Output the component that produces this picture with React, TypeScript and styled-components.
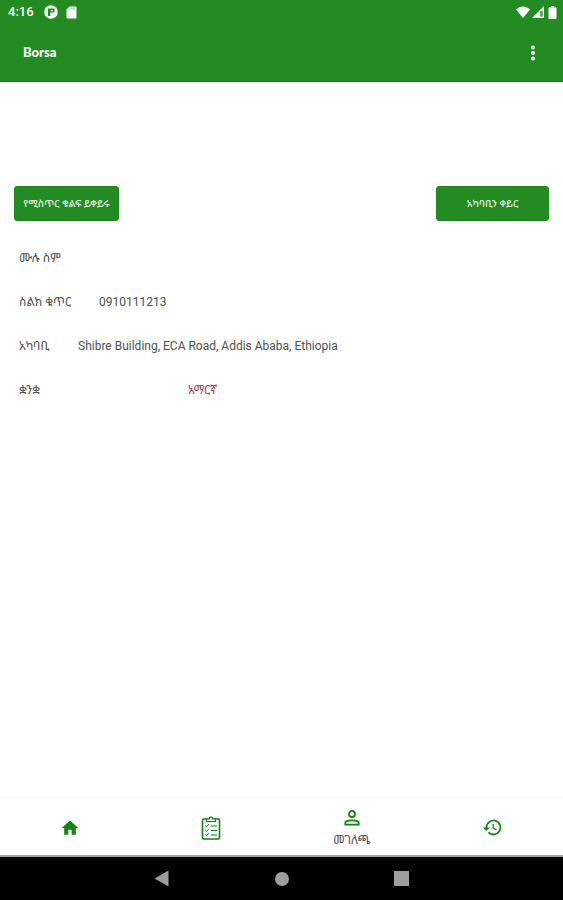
import React from "react";
import styled, { createGlobalStyle } from "styled-components";

const GREEN = "#228b22";
const ICON_GREEN = "#128412";

const GlobalStyle = createGlobalStyle`
  *, *::before, *::after { box-sizing: border-box; }
  body {
    margin: 0;
    background: #fff;
    color: #505050;
    font-family: Roboto, "Noto Sans Ethiopic", "Abyssinica SIL", "Noto Sans", sans-serif;
    font-size: 12px;
    line-height: 16px;
  }
  button { font-family: inherit; cursor: pointer; }
  svg { display: block; }
`;

const Screen = styled.div`
  display: flex;
  flex-direction: column;
  min-height: 100vh;
`;

const Header = styled.header`
  background: ${GREEN};
  color: #fff;
  border-bottom: 1px solid #1f821f;
`;

const StatusBar = styled.div`
  display: flex;
  align-items: center;
  justify-content: space-between;
  height: 24px;
  padding: 0 6px 0 8px;
`;

const StatusGroup = styled.div<{ $gap: number }>`
  display: flex;
  align-items: center;
  gap: ${({ $gap }) => $gap}px;
`;

const Clock = styled.time`
  font-size: 13px;
  font-weight: 500;
`;

const AppBar = styled.div`
  display: flex;
  align-items: center;
  justify-content: space-between;
  height: 57px;
  padding: 0 18px 0 23px;
`;

const Title = styled.h1`
  margin: 0;
  padding-bottom: 2px;
  font-family: Lato, sans-serif;
  font-size: 13px;
  font-weight: 900;
  line-height: 16px;
`;

const IconButton = styled.button`
  display: grid;
  place-items: center;
  width: 24px;
  height: 32px;
  padding: 0;
  border: 0;
  background: none;
  color: inherit;
`;

const Content = styled.main`
  flex: 1;
  padding: 104px 14px 0;
`;

const Actions = styled.div`
  display: flex;
  justify-content: space-between;
  margin-bottom: 21px;
`;

const ActionButton = styled.button<{ $width: number }>`
  width: ${({ $width }) => $width}px;
  height: 35px;
  padding: 0 0 2px;
  border: 1px solid #1f851f;
  border-radius: 3px;
  background: ${GREEN};
  color: #e8f4e8;
  font-size: 10px;
  font-weight: 500;
  white-space: nowrap;
`;

const Details = styled.dl`
  display: flex;
  flex-direction: column;
  gap: 12px;
  margin: 0;
  padding-left: 5px;
`;

const DetailRow = styled.div`
  display: flex;
  align-items: center;
  min-height: 32px;
`;

const Label = styled.dt<{ $width: number }>`
  flex: none;
  width: ${({ $width }) => $width}px;
  white-space: nowrap;
`;

const Value = styled.dd`
  margin: 0;
`;

const LanguageButton = styled.button`
  display: block;
  padding: 0;
  border: 0;
  background: none;
  color: #a8324c;
  font-size: 12px;
  line-height: 16px;
`;

const Tabs = styled.nav`
  display: grid;
  grid-template-columns: repeat(4, 1fr);
  height: 60px;
  border-top: 1px solid #f8f8f8;
  border-bottom: 2px solid #a4a4a4;
`;

const Tab = styled.a`
  display: flex;
  flex-direction: column;
  align-items: center;
  justify-content: center;
  gap: 8px;
  padding-top: 2px;
  color: ${ICON_GREEN};
  text-decoration: none;
`;

const TabLabel = styled.span`
  color: #505050;
  font-size: 12px;
  line-height: 12px;
`;

const SystemBar = styled.div`
  display: flex;
  align-items: center;
  justify-content: center;
  gap: 96px;
  height: 43px;
  background: #000;
  color: #9e9e9e;
`;

const AppIcon = () => (
  <svg width="14" height="14" viewBox="0 0 14 14" aria-hidden="true">
    <circle cx="7" cy="7" r="6.8" fill="#fff" />
    <path d="M4 3.5h6.500v4H6.300V11H4z" fill={GREEN} />
    <path d="M6.500 5.200H9v1H6.500z" fill="#fff" />
  </svg>
);

const CardIcon = () => (
  <svg width="11" height="13" viewBox="0 0 11 13" aria-hidden="true">
    <path d="M3.5.5h6a1 1 0 0 1 1 1v10a1 1 0 0 1-1 1h-8a1 1 0 0 1-1-1v-8z" fill="#fff" />
    <path d="M4 2v1.500M6 2v1.500M8 2v1.500" stroke={GREEN} strokeWidth=".6" />
  </svg>
);

const WifiIcon = () => (
  <svg width="14" height="12" viewBox="0 0 14 12" aria-hidden="true">
    <path d="M0 3.4C4-.6 10-.6 14 3.4L7 12z" fill="#fff" />
  </svg>
);

const SignalIcon = () => (
  <svg width="12" height="12" viewBox="0 0 12 12" aria-hidden="true">
    <path d="M0 12 12 0v12z" fill="#fff" />
    <path d="M8.300 5h2.500v5.500H8.300z" fill={GREEN} />
    <path d="M9.300 5h1.200v5H9.300z" fill="#fff" opacity=".35" />
  </svg>
);

const BatteryIcon = () => (
  <svg width="9" height="13" viewBox="0 0 9 13" aria-hidden="true">
    <path d="M3 0h3v1.200h1.500q1 0 1 1V12q0 1-1 1h-6q-1 0-1-1V2.200q0-1 1-1H3z" fill="#fff" />
  </svg>
);

const MoreIcon = () => (
  <svg width="6" height="18" viewBox="0 0 6 18" fill="currentColor" aria-hidden="true">
    <circle cx="3" cy="3.400" r="2" />
    <circle cx="3" cy="9" r="2" />
    <circle cx="3" cy="14.600" r="2" />
  </svg>
);

const HomeIcon = () => (
  <svg width="20" height="20" viewBox="0 0 24 24" fill="currentColor" aria-hidden="true">
    <path d="M10 20v-6h4v6h5v-8h3L12 3 2 12h3v8z" />
  </svg>
);

const ClipboardIcon = () => (
  <svg width="20" height="24" viewBox="0 0 20 24" fill="none" stroke="currentColor" aria-hidden="true">
    <rect x="1.500" y="3" width="17" height="20" rx="1.500" strokeWidth="1.600" />
    <path d="M5.500 5.500V3h2.700a1.800 1.800 0 0 1 3.600 0h2.700v2.500z" fill="#fff" strokeWidth="1.200" />
    <path d="m4.300 9.500 1.300 1.200L8 8M4.300 14l1.300 1.200L8 12.600M4.300 18.500l1.300 1.200L8 17.200" />
    <path d="M10 10h6M10 14.500h6M10 19h6" strokeWidth="1" />
  </svg>
);

const PersonIcon = () => (
  <svg width="16" height="16" viewBox="0 0 16 16" fill="none" stroke="currentColor" strokeWidth="1.800" aria-hidden="true">
    <circle cx="8" cy="4" r="3" />
    <path d="M1.300 14.700v-1.900c0-1.400 3.200-2.500 6.700-2.500s6.700 1.100 6.700 2.500v1.900z" />
  </svg>
);

const HistoryIcon = () => (
  <svg width="21" height="21" viewBox="0 0 24 24" fill="currentColor" aria-hidden="true">
    <path d="M13 3a9 9 0 0 0-9 9H1l3.900 3.900L9 12H6a7 7 0 1 1 2.060 4.940l-1.420 1.420A9 9 0 1 0 13 3zm-1 5v5l4.250 2.520.770-1.280-3.520-2.090V8z" />
  </svg>
);

const tabs = [
  { id: "home", name: "ዋና", icon: <HomeIcon /> },
  { id: "orders", name: "ዝርዝር", icon: <ClipboardIcon /> },
  { id: "profile", name: "መገለጫ", icon: <PersonIcon />, active: true },
  { id: "history", name: "ታሪክ", icon: <HistoryIcon /> },
];

export default function App() {
  return (
    <Screen lang="am">
      <GlobalStyle />
      <Header>
        <StatusBar>
          <StatusGroup $gap={10}>
            <Clock>4:16</Clock>
            <StatusGroup $gap={8}>
              <AppIcon />
              <CardIcon />
            </StatusGroup>
          </StatusGroup>
          <StatusGroup $gap={4}>
            <StatusGroup $gap={2}>
              <WifiIcon />
              <SignalIcon />
            </StatusGroup>
            <BatteryIcon />
          </StatusGroup>
        </StatusBar>
        <AppBar>
          <Title>Borsa</Title>
          <IconButton type="button" aria-label="More options"><MoreIcon /></IconButton>
        </AppBar>
      </Header>
      <Content>
        <Actions>
          <ActionButton type="button" $width={105}>የሚስጥር ቁልፍ ይቀይሩ</ActionButton>
          <ActionButton type="button" $width={113}>አካባቢን ቀይር</ActionButton>
        </Actions>
        <Details>
          <DetailRow><Label $width={80}>ሙሉ ስም</Label></DetailRow>
          <DetailRow><Label $width={80}>ስልክ ቁጥር</Label><Value>0910111213</Value></DetailRow>
          <DetailRow><Label $width={59}>አካባቢ</Label><Value>Shibre Building, ECA Road, Addis Ababa, Ethiopia</Value></DetailRow>
          <DetailRow><Label $width={169}>ቋንቋ</Label><Value><LanguageButton type="button">አማርኛ</LanguageButton></Value></DetailRow>
        </Details>
      </Content>
      <Tabs>
        {tabs.map((tab) => (
          <Tab key={tab.id} href={`#${tab.id}`} aria-label={tab.name} aria-current={tab.active ? "page" : undefined}>
            {tab.icon}
            {tab.active && <TabLabel>{tab.name}</TabLabel>}
          </Tab>
        ))}
      </Tabs>
      <SystemBar>
        <IconButton type="button" aria-label="Back">
          <svg width="15" height="17" viewBox="0 0 15 17"><path d="M.5 8.500 14.500.5v16z" fill="currentColor" /></svg>
        </IconButton>
        <IconButton type="button" aria-label="Home">
          <svg width="14" height="14" viewBox="0 0 14 14"><circle cx="7" cy="7" r="7" fill="currentColor" /></svg>
        </IconButton>
        <IconButton type="button" aria-label="Recent apps">
          <svg width="15" height="15" viewBox="0 0 15 15"><path d="M0 0h15v15H0z" fill="currentColor" /></svg>
        </IconButton>
      </SystemBar>
    </Screen>
  );
}
